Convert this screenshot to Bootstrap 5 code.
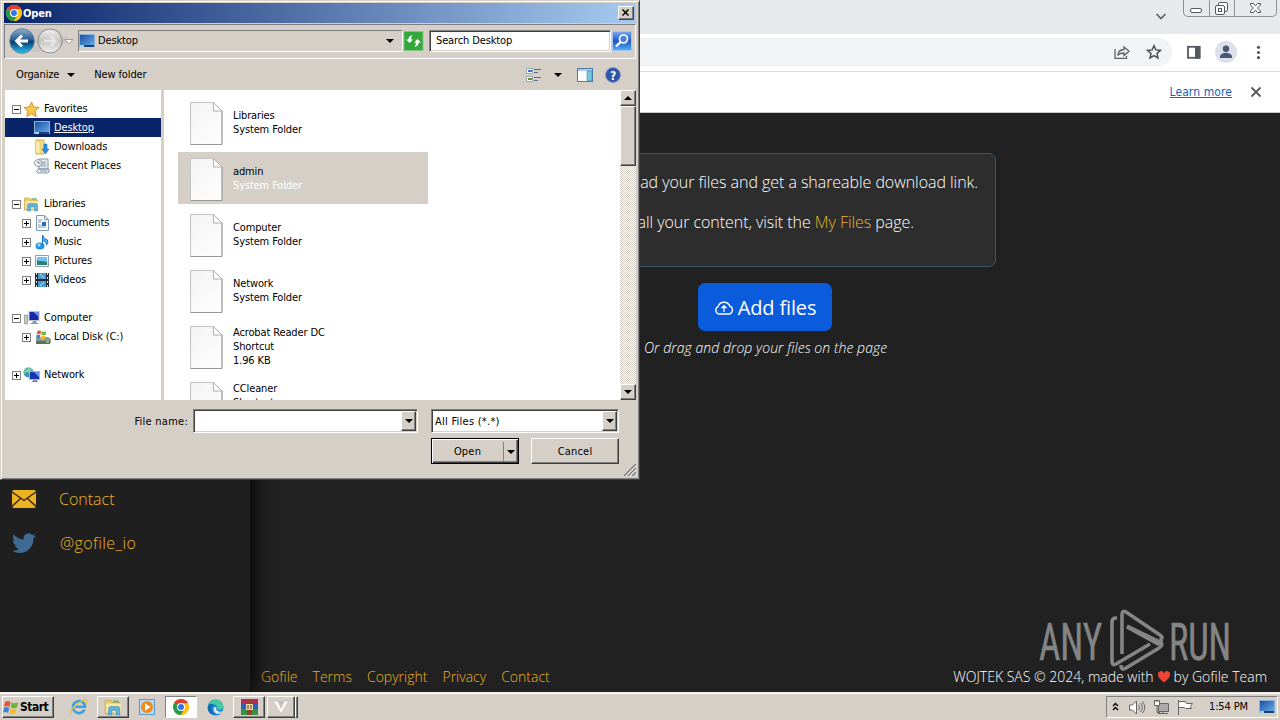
<!DOCTYPE html>
<html lang="en">
<head>
    <meta charset="UTF-8">
    <meta name="viewport" content="width=device-width, initial-scale=1.0">
    <title>Gofile - Upload</title>
    <link href="https://cdn.jsdelivr.net/npm/bootstrap@5.3.0/dist/css/bootstrap.min.css" rel="stylesheet">
    <style>
        :root { --face: #d5cfc7; --gold: #e9b32a; }
        body { width: 1280px; height: 720px; font: 11px/14px "DejaVu Sans Condensed", "DejaVu Sans", sans-serif; font-stretch: condensed; color: #000; letter-spacing: -.13px; }
        svg { display: block; flex: none; }
        .tabstrip { height: 34px; background: #e7eaed; }
        .win-controls { width: 94px; height: 17px; margin-right: 3px; border: 1px solid #8b9094; border-top: 0; border-radius: 0 0 5px 5px; }
        .win-controls div + div { border-left: 1px solid #8b9094; }
        .toolbar { height: 38px; padding-bottom: 2px; background: #fff; border-bottom: 1px solid #d9dbde; }
        .omnibox { width: 1172px; height: 28px; background: #f1f3f4; border-radius: 0 14px 14px 0; }
        .infobar { height: 41px; border-bottom: 1px solid #c9cacc; background: #fff; }
        .infobar a { font: 12px "DejaVu Sans Condensed", sans-serif; font-stretch: condensed; color: #1a62b8; letter-spacing: .1px; }
        .page { background: #212121; font-family: "Open Sans", sans-serif; font-stretch: normal; color: #fff; letter-spacing: 0; }
        .side { width: 250px; background: #1f1f1f; padding: 366px 0 0 12px; font-size: 16px; font-weight: 300; line-height: 24px; z-index: 1; box-shadow: 2px 0 18px #000; color: var(--gold); clip-path: inset(0 -30px 0 0); }
        .side-link { height: 44px; }
        .side-link span { margin-left: 23px; }
        .side-link .handle { margin-left: 24px; letter-spacing: .4px; }
        .info-box { width: 462px; height: 114px; margin: 40px 0 0 284px; padding: 16px 17px 0; background: #2d2d2d; border: 1px solid #3e566a; border-radius: 7px; font-size: 16px; font-weight: 300; line-height: 24px; text-align: right; white-space: nowrap; letter-spacing: -.05px; }
        .visit { padding-right: 64px; }
        .gold { color: var(--gold); }
        .add-files { width: 134px; height: 48px; margin: 16px 0 0 448px; padding-top: 2px; background: #0b5cdc; border-radius: 7px; font-size: 20px; color: #fff; letter-spacing: -.15px; }
        .drag-note { margin: 5px 0 0 394px; font-size: 14px; line-height: 24px; font-style: italic; font-weight: 300; white-space: nowrap; letter-spacing: .06px; }
        .page-foot { height: 30px; padding: 0 13px 0 11px; font-size: 14px; font-weight: 300; white-space: nowrap; }
        .foot-links { gap: 15px; }
        .watermark { left: 1036px; top: 608px; z-index: 3; }

        .dialog { left: 0; top: 0; width: 640px; height: 480px; z-index: 5; background: var(--face); border: 1px solid var(--face); border-right: 1px solid #404040; border-bottom: 1px solid #404040; padding: 2px 3px 0 2px; box-shadow: inset 1px 1px #fff, inset -1px -1px #808080; }
        .title { height: 20px; margin-left: 1px; background: linear-gradient(90deg, #0a246a, #a6caf0); color: #fff; font: bold 11px "DejaVu Sans Condensed", sans-serif; font-stretch: condensed; }
        .raised { background: var(--face); border: 1px solid; border-color: #fff #404040 #404040 #fff; box-shadow: inset -1px -1px #808080; }
        .sunken { border: 1px solid; border-color: #808080 #fff #fff #808080; }
        .field { background: #fff; border: 1px solid; border-color: #808080 #fff #fff #808080; box-shadow: inset 1px 1px #404040, inset -1px -1px #d5cfc7; }
        .address { height: 35px; margin: 1px 0 0 1px; padding: 0 0 2px 4px; }
        .path { width: 325px; height: 22px; margin-left: 3px; }
        .commands { height: 31px; }
        .tree { width: 156px; padding-top: 9px; margin-left: 2px; background: #fff; }
        .tree-row { height: 19px; padding: 1px 0 0 7px; white-space: nowrap; }
        .tree-row.child { padding-left: 17px; }
        .tree-row.leaf { padding-left: 29px; }
        .tree-row.picked { background: #0a246a; color: #fff; text-decoration: underline; }
        .tree-row span { margin-left: 4px; }
        .tree-row.child span { margin-left: 5px; }
        .box { width: 9px; height: 9px; margin-right: 2px; border: 1px solid #808080; background: linear-gradient(#000, #000) center / 5px 1px no-repeat; }
        .box.plus { background: linear-gradient(#000, #000) center / 5px 1px no-repeat, linear-gradient(#000, #000) center / 1px 5px no-repeat; }
        .tree-row.child .box { margin-right: 4px; }
        .files { margin-left: 3px; padding: 6px 0 0 14px; background: #fff; overflow: hidden; }
        .file { width: 250px; height: 52px; margin-bottom: 4px; padding: 2px 0 0 12px; }
        .file.picked { background: var(--face); }
        .file.picked .kind { color: #fff; }
        .file-text { margin-left: 10px; }
        .scroller { width: 16px; background: repeating-conic-gradient(#fff 0 25%, #d5cfc7 0 50%) 0 0 / 2px 2px; }
        .tri { width: 0; height: 0; border: 4px solid transparent; border-top-color: #000; border-bottom: 0; }
        .tri.up { border-top: 0; border-bottom: 4px solid #000; }
        .arrow-btn { width: 15px; }
        .name-row { height: 24px; margin-top: 9px; letter-spacing: .25px; }
        .name-row span { padding-top: 2px; }
        .win-btn { width: 88px; height: 26px; padding-top: 1px; letter-spacing: .2px; }
        .default-btn { border-color: #000; box-shadow: inset 1px 1px #fff, inset -1px -1px #404040, inset -2px -2px #808080; }

        .taskbar { height: 28px; background: var(--face); border-top: 1px solid #ece9e4; box-shadow: inset 0 1px #fff; padding: 1px 2px 0; z-index: 2; }
        .task { height: 22px; width: 32px; margin-right: 2px; }
        .start { width: 52px; height: 22px; font-weight: bold; font-size: 12px; letter-spacing: -.5px; }
        .start span { margin-left: 1px; }
        .tray { width: 172px; height: 22px; }
    </style>
</head>
<body class="overflow-hidden">
    <!-- shared icons -->
    <svg width="0" height="0" class="position-absolute">
        <defs>
            <linearGradient id="gScreen" x2="1" y2="1"><stop stop-color="#164b9c"/><stop offset="1" stop-color="#6eb2f2"/></linearGradient>
            <linearGradient id="gBack" x2="0" y2="1"><stop stop-color="#8eaed0"/><stop offset=".48" stop-color="#23558d"/><stop offset=".5" stop-color="#073568"/><stop offset="1" stop-color="#25c4f4"/></linearGradient>
            <linearGradient id="gFwd" x2="0" y2="1"><stop stop-color="#eee"/><stop offset=".5" stop-color="#c6c5c3"/><stop offset="1" stop-color="#eee"/></linearGradient>
            <linearGradient id="gPaper" x2="1" y2="1"><stop stop-color="#f3f3f3"/><stop offset="1" stop-color="#fff"/></linearGradient>
            <linearGradient id="gFind" x2="0" y2="1"><stop stop-color="#7fa9ec"/><stop offset=".5" stop-color="#1f55c8"/><stop offset="1" stop-color="#4fb4f2"/></linearGradient>
            <symbol id="chrome" viewBox="0 0 16 16">
                <circle cx="8" cy="8" r="8" fill="#fbc116"/>
                <path d="M8 8L1.100 4A8 8 0 0 1 14.900 4z" fill="#e33b2e"/>
                <path d="M1.100 4A8 8 0 0 0 8 16l3.400-6L8 8z" fill="#229a4b"/>
                <path d="M8 4.200h6.900A8 8 0 0 1 8 16l3.400-6z" fill="#fbc116"/>
                <circle cx="8" cy="8" r="4" fill="#fff"/><circle cx="8" cy="8" r="3" fill="#3175e0"/>
            </symbol>
            <symbol id="screen" viewBox="0 0 16 14">
                <rect x=".5" y=".5" width="15" height="12" fill="url(#gScreen)" stroke="#8db2d8"/>
                <path d="M1 11h14v2H1z" fill="#1c4175"/><path d="M1 11h4v2H1z" fill="#9fd4e6"/>
            </symbol>
            <symbol id="folder" viewBox="0 0 16 16">
                <path d="M1 2h5l1 2h7v10H1z" fill="#e9cd6e" stroke="#c7a548" stroke-width=".7"/>
                <path d="M2 5h13v8H2z" fill="#f8eaa5"/>
                <path d="M4 15V9.500q0-2 2-2h6q2 0 2 2V15h-3v-4H7v4z" fill="#5fb3dc" stroke="#3e88b5" stroke-width=".5"/>
                <path d="M8 3h5" stroke="#64b565" stroke-width="1.500"/>
            </symbol>
            <symbol id="pc" viewBox="0 0 16 16">
                <path d="M5 1h11v10H5z" fill="#b9c5d6"/><path d="M6 2h9v8H6z" fill="#1727a8"/>
                <path d="M10 2h5v5z" fill="#6e8ee8"/><path d="M9 11h4v2h2v1H7v-1h2z" fill="#8b98ab"/>
                <path d="M1 5h3v9H1z" fill="#c3ccb4" stroke="#777f77" stroke-width=".6"/>
            </symbol>
            <symbol id="flag" viewBox="0 0 16 16">
                <path d="M2 3q3-2 5.500 0L6.500 8Q4 6 1 8z" fill="#e8552c"/>
                <path d="M8.500 3.400q3 1.600 6.500 0L14 8.500q-3 1.500-6.300 0z" fill="#6cb63c"/>
                <path d="M.8 9q3-2 5.500 0L5 14q-2.500-2-5 0z" fill="#3d87d9"/>
                <path d="M7.400 9.400q3 1.600 6.300 0l-1 5q-3 1.600-6.400 0z" fill="#f5be29"/>
            </symbol>
            <symbol id="paper" viewBox="0 0 33 43">
                <path d="M.5.5H23.500L32 9V42.500H.5z" fill="url(#gPaper)" stroke="#c4c4c4"/>
                <path d="M.5 42.500H32V9" fill="none" stroke="#979797"/>
                <path d="M23.500.5V9H32z" fill="#fff" stroke="#b0b0b0"/>
            </symbol>
        </defs>
    </svg>

    <div class="d-flex flex-column h-100">
        <!-- Browser -->
        <div class="tabstrip d-flex justify-content-end">
            <svg width="12" height="34" class="me-3" viewBox="0 0 12 34"><path d="M1.500 14l4.500 4.500 4.500-4.500" fill="none" stroke="#5f6368" stroke-width="1.700"/></svg>
            <div class="win-controls d-flex">
                <div style="width:25px"><svg width="25" height="16"><rect x="6.500" y="8.500" width="11" height="4" rx="1.500" fill="#fff" stroke="#555a60"/></svg></div>
                <div style="width:25px"><svg width="24" height="16" fill="#fff" stroke="#555a60"><rect x="8.500" y="2.500" width="9" height="9" rx="1.500"/><rect x="5.500" y="5.500" width="9" height="9" rx="1.500"/><rect x="8.500" y="8.500" width="3" height="3"/></svg></div>
                <div class="flex-fill"><svg width="42" height="16"><path d="M15.500 3.500h3l2 2.500 2-2.500h3v1.500l-3 3 3 3v1.500h-3l-2-2.500-2 2.500h-3V11l3-3-3-3z" fill="#fff" stroke="#555a60"/></svg></div>
            </div>
        </div>
        <div class="toolbar d-flex align-items-center">
            <div class="omnibox d-flex align-items-center justify-content-end">
                <svg width="16" height="16" viewBox="0 0 16 16" fill="none" stroke="#5f6368" stroke-width="1.300"><path d="M1 5v9.300h11.500V12M4 11q0-5 6-5.500V3l5 4.300-5 4.200V9q-4 0-6 2z"/></svg>
                <svg width="16" height="16" viewBox="0 0 16 16" style="margin:0 10px 0 16px" fill="none" stroke="#4b5055" stroke-width="1.500"><path d="M8 1.800l1.900 4.100 4.500.5-3.400 3 1 4.500L8 11.600l-4 2.300 1-4.500-3.400-3 4.500-.5z"/></svg>
            </div>
            <svg width="108" height="28" viewBox="0 0 108 28">
                <rect x="16" y="8.800" width="11.500" height="11" fill="#fff" stroke="#55595e" stroke-width="1.800"/><path d="M23 8h5.400v12.700H23z" fill="#55595e"/>
                <circle cx="54" cy="14" r="11" fill="#dce0e8"/><circle cx="54" cy="10.800" r="3.200" fill="#4a5878"/><path d="M48 20v-2q2-3.200 6-3.200t6 3.200v2z" fill="#4a5878"/>
                <g fill="#55595e"><circle cx="86.500" cy="9.300" r="1.600"/><circle cx="86.500" cy="14.500" r="1.600"/><circle cx="86.500" cy="19.700" r="1.600"/></g>
            </svg>
        </div>
        <div class="infobar d-flex align-items-center justify-content-end">
            <a href="#">Learn more</a>
            <svg width="12" height="12" style="margin:0 18px 0 18px" viewBox="0 0 12 12"><path d="M1.500 1.500l9 9m0-9l-9 9" stroke="#55595e" stroke-width="1.800"/></svg>
        </div>

        <div class="page d-flex flex-fill">
            <div class="side">
                <div class="side-link d-flex align-items-start pt-2">
                    <svg width="24" height="24" viewBox="0 0 24 24"><rect y="3" width="24" height="18" rx="2" fill="#edb220"/><path d="M0 5l12 8.500L24 5M0 19.500l8.500-8M24 19.500l-8.500-8" fill="none" stroke="#2a2110" stroke-width="1.300"/></svg>
                    <span>Contact</span>
                </div>
                <div class="side-link d-flex align-items-start pt-2">
                    <svg width="24" height="24" viewBox="0 0 24 24"><path d="M23.900 4.700a9 9 0 0 1-2.800.8 4.900 4.900 0 0 0 2.100-2.700 9.800 9.800 0 0 1-3.100 1.200 4.900 4.900 0 0 0-8.400 4.500A13.900 13.900 0 0 1 1.600 3.300a4.900 4.900 0 0 0 1.500 6.600 4.900 4.900 0 0 1-2.200-.6v.1a4.900 4.900 0 0 0 3.900 4.800 4.900 4.900 0 0 1-2.200.1 4.900 4.900 0 0 0 4.600 3.400A9.900 9.900 0 0 1 0 19.700a13.900 13.900 0 0 0 7.500 2.200c9.100 0 14-7.500 14-14v-.6a10 10 0 0 0 2.400-2.600z" fill="#3e6a94"/></svg>
                    <span class="handle">@gofile_io</span>
                </div>
            </div>
            <div class="flex-fill d-flex flex-column">
                <div class="info-box">
                    <p class="mb-3">Upload your files and get a shareable download link.</p>
                    <p class="visit mb-0">To manage all your content, visit the <span class="gold">My Files</span> page.</p>
                </div>
                <div class="add-files d-flex align-items-center justify-content-center">
                    <svg width="20" height="20" viewBox="0 0 20 20" class="me-1" fill="none" stroke="#fff" stroke-width="1.300"><path d="M4.500 16a4 4 0 0 1-.4-7.400 6.200 6.200 0 0 1 11.700-.4A4.100 4.100 0 0 1 15.500 16zM10 14V8M7.500 10.200L10 7.700l2.500 2.500"/></svg>
                    <span>Add files</span>
                </div>
                <div class="drag-note">Or drag and drop your files on the page</div>
                <div class="page-foot d-flex align-items-center mt-auto">
                    <div class="foot-links d-flex gold"><span>Gofile</span><span>Terms</span><span>Copyright</span><span>Privacy</span><span>Contact</span></div>
                    <div class="made ms-auto d-flex align-items-center"><span>WOJTEK SAS © 2024, made with</span>
                        <svg width="12" height="12" class="mx-1" viewBox="0 0 12 12"><path d="M6 11.500Q0 7 0 3.800A3 3 0 0 1 6 2.600 3 3 0 0 1 12 3.800Q12 7 6 11.500z" fill="#f04438"/></svg>
                        <span>by Gofile Team</span>
                    </div>
                </div>
            </div>
        </div>

        <!-- Taskbar -->
        <div class="taskbar d-flex align-items-center">
            <div class="start raised d-flex align-items-center"><svg width="16" height="16"><use href="#flag"/></svg><span>Start</span></div>
            <svg width="18" height="18" viewBox="0 0 18 18" style="margin:0 9px 0 16px"><path d="M14.500 11.500A6 6 0 1 1 15 8.800H5.500" fill="none" stroke="#3aa0e6" stroke-width="2.600"/><path d="M1.500 16Q-1 13 6 7T16.500 2q1 1-.5 4" fill="none" stroke="#edbd3a" stroke-width="1.200"/></svg>
            <div class="task raised d-flex align-items-center justify-content-center"><svg width="18" height="18"><use href="#folder"/></svg></div>
            <svg width="16" height="16" viewBox="0 0 16 16" style="margin:0 10px 0 8px"><rect x=".5" y=".5" width="15" height="15" fill="#b5d9f2" stroke="#5b9ccc"/><circle cx="8" cy="8" r="6" fill="#f08a1d"/><path d="M6 4.300L11.500 8 6 11.700z" fill="#fff"/></svg>
            <div class="task sunken bg-white d-flex align-items-center justify-content-center"><svg width="16" height="16"><use href="#chrome"/></svg></div>
            <svg width="17" height="17" viewBox="0 0 17 17" style="margin:0 9px 0 8px"><circle cx="8.500" cy="8.500" r="8" fill="#1583cf"/><path d="M1 6Q4 0 10 .7q6 1 6.500 7-.5 3.300-4 3.300-3 0-2-2.500Q9 5 5 5 2 5 1 8z" fill="#43c8a0"/><path d="M7 8q-2 5 3 7 4 0 6-3-4 1.500-6-.5-1.500-1.500-.5-3.500z" fill="#d5e5ed"/><path d="M1 7q2-3 5-2-4 4 1 10.500Q0 14 1 7z" fill="#1767b4"/></svg>
            <div class="task raised d-flex align-items-center justify-content-center"><svg width="17" height="16" viewBox="0 0 17 16"><path d="M0 0h17v5H0z" fill="#b52b51"/><path d="M0 5h17v5H0z" fill="#2d5fb8"/><path d="M0 10h17v6H0z" fill="#36923a"/><path d="M6 0h5v16H6z" fill="#9c3f2c"/><path d="M5 5h7v6H5z" fill="#e9d6a0"/><path d="M7 6v4m3-4v4" stroke="#5b3a15"/></svg></div>
            <div class="task raised d-flex align-items-center ps-1" style="width:28px"><svg width="18" height="16" viewBox="0 0 18 16"><path d="M1 2h5l3 7 3-7h5L9 15z" fill="#f7f7f7" stroke="#b7b4ae" stroke-width=".6"/><path d="M6 2h6L9 8z" fill="#c2beb7"/></svg></div>
            <div class="raised task" style="width:3px;margin-left:-2px"></div>
            <div class="tray sunken ms-auto d-flex align-items-center">
                <svg width="98" height="20" viewBox="0 0 98 20" fill="none" stroke="#666">
                    <path d="M6 9l2.500-2.500L11 9M6 13l2.500-2.500L11 13" stroke="#000" stroke-width="1.400"/>
                    <path d="M22.500 8h3l4-4v13l-4-4h-3z" fill="#fff"/><path d="M31.500 8q2 2.500 0 5M33.500 6q3.500 4.500 0 9M35.500 4.500q4.500 6 0 11.500"/>
                    <path d="M51.500 6.500h10v8h-10z" fill="#aaa"/><path d="M51 16.500h10M56 14v2"/><path d="M47.500 3.500h5v5h-5z" fill="#fff"/><path d="M50 8.500v7h3M49 3v2m2-2v2"/>
                    <path d="M71.500 3v15"/><path d="M71.500 4.500h7l1 2h6l-2 3 1 2h-6l-1-1h-6z" fill="#fff"/>
                </svg>
                <span style="margin-left:4px">1:54 PM</span>
                <svg width="16" height="14" style="margin:0 2px 0 auto"><use href="#screen"/></svg>
            </div>
        </div>
    </div>

    <svg class="watermark position-absolute" width="200" height="66" viewBox="0 0 200 66">
        <g fill="#858585" stroke="#858585" font-family="Roboto, sans-serif" font-size="52" font-weight="400" stroke-width=".5">
            <text x="3" y="51.500" textLength="63" lengthAdjust="spacingAndGlyphs">ANY</text>
            <text x="133" y="51.500" textLength="62" lengthAdjust="spacingAndGlyphs">RUN</text>
        </g>
        <g fill="none" stroke="#858585" stroke-width="3.600" stroke-linejoin="round">
            <path d="M86 46V7q0-5 4-3l34 23q4 3 0 5"/><path d="M91 19l31 17q4-1 3-6"/><path d="M81 10h-1q-4 0-4 4v39q0 5 4 3l34-20"/><path d="M85 57q0 6 5 3l33-20q5-3 1-6L91 18"/>
        </g>
    </svg>

    <!-- File picker -->
    <div class="dialog position-absolute d-flex flex-column">
        <div class="title d-flex align-items-center">
            <svg width="16" height="16" style="margin-left:2px"><use href="#chrome"/></svg><span style="margin-left:1px">Open</span>
            <div class="raised ms-auto" style="width:16px;height:14px;margin-right:2px"><svg width="14" height="12" viewBox="0 0 14 12"><path d="M3.500 2.500l6 6m0-6l-6 6" stroke="#000" stroke-width="1.500"/></svg></div>
        </div>
        <div class="address sunken d-flex align-items-center">
            <svg width="66" height="28" viewBox="0 0 66 28">
                <path d="M12 2h33q7 0 8 6l10 5-10 5q-2 7-10 7H12z" fill="#c1beba" opacity=".6"/>
                <circle cx="13" cy="14" r="12.300" fill="url(#gBack)" stroke="#63839f"/><path d="M19 14H8M13 8.500L7.500 14l5.500 5.500" fill="none" stroke="#fff" stroke-width="2.800"/>
                <circle cx="41" cy="14" r="12" fill="url(#gFwd)" stroke="#8e8c89"/><path d="M35 14h11M41.500 9l5 5-5 5" fill="none" stroke="#e7e6e5" stroke-width="2.500"/>
                <path d="M56 12.500h8L60 16.500z" fill="#fff" stroke="#8b8883" stroke-width=".8"/>
            </svg>
            <div class="path sunken d-flex align-items-center"><svg width="16" height="14"><use href="#screen"/></svg><span style="margin-left:3px">Desktop</span><div class="tri ms-auto" style="margin-right:8px"></div></div>
            <svg width="21" height="20" viewBox="0 0 20 20"><rect x=".5" y=".5" width="19" height="19" fill="#32a83a" stroke="#85c386"/><path d="M6 12L2.500 8.500h2.200Q5 5 9 4 7.500 6 7.600 8.500h2zM14 8l3.500 3.500h-2.200Q15 15 11 16q1.500-2 1.400-4.500h-2z" fill="#fff"/></svg>
            <div class="field d-flex align-items-center" style="width:182px;height:22px;margin-left:5px;padding-left:6px">Search Desktop</div>
            <svg width="20" height="20" viewBox="0 0 20 20" style="margin-left:1px"><rect x=".5" y=".5" width="19" height="19" fill="url(#gFind)" stroke="#a9c6ee"/><circle cx="11.500" cy="8" r="4" fill="#4b82de" stroke="#fff" stroke-width="1.700"/><path d="M8.500 11L4 15.500" stroke="#fff" stroke-width="2.400"/></svg>
        </div>
        <div class="commands d-flex align-items-center">
            <span style="margin-left:13px">Organize</span><div class="tri ms-2"></div><span style="margin-left:19px">New folder</span>
            <svg width="112" height="18" viewBox="0 0 112 18" class="ms-auto">
                <g stroke="#9ba7b0"><rect x="2.500" y="2.500" width="6" height="5" fill="#fff"/><rect x="2.500" y="10.500" width="6" height="5" fill="#fff"/></g><path d="M4 4h4v2H4z" fill="#2b7ad1"/><path d="M4 12h4v2H4z" fill="#5c9434"/><path d="M10 3.500h7M10 6.500h4M10 11.500h7M10 14.500h4" stroke="#55708c"/>
                <path d="M30 7h8l-4 4z"/>
                <rect x="53.500" y="2.500" width="15" height="13" fill="#fff" stroke="#4e79a6"/><path d="M54 3h14v2H54z" fill="#a9c9e5"/><path d="M63 5h5v10h-5z" fill="#72c8e8" stroke="#4e79a6" stroke-width=".6"/>
                <circle cx="89" cy="9" r="7.500" fill="#2d55a8" stroke="#8a9bbd"/><text x="89" y="13.500" text-anchor="middle" fill="#fff" font-size="12" font-weight="bold">?</text>
            </svg>
        </div>
        <div class="d-flex" style="height:310px">
            <div class="tree">
                <div class="tree-row d-flex align-items-center"><div class="box"></div><svg width="17" height="17" viewBox="0 0 17 17"><path d="M8.500 1l2.200 5 5.300.5-4 3.600 1.200 5.400-4.700-2.800-4.700 2.800L5 10.100 1 6.500 6.300 6z" fill="#fbc94a" stroke="#e08a1e"/></svg><span>Favorites</span></div>
                <div class="tree-row leaf picked d-flex align-items-center"><svg width="16" height="14"><use href="#screen"/></svg><span>Desktop</span></div>
                <div class="tree-row leaf d-flex align-items-center"><svg width="16" height="16" viewBox="0 0 16 16"><path d="M2 1h8v14H2z" fill="#f3dc87" stroke="#d1ac4d"/><path d="M2 1l4 2v12l-4-1z" fill="#fbf0b4" stroke="#d1ac4d" stroke-width=".5"/><path d="M10 5h3v5h2l-3.500 5L8 10h2z" fill="#2c8be0" stroke="#1b63ad" stroke-width=".5"/></svg><span>Downloads</span></div>
                <div class="tree-row leaf d-flex align-items-center"><svg width="16" height="16" viewBox="0 0 16 16"><path d="M5 1h9v10H5zM4 11h11q1 4-2 4H4q-3-1 0-4z" fill="#e7edf2" stroke="#8797a5"/><path d="M7 4h5M7 6h5M7 8h5M6 13h7" stroke="#7e9cb8"/><circle cx="4" cy="5" r="3.500" fill="#f4f4f4" stroke="#929aa1"/><path d="M4 3v2h2" fill="none" stroke="#777"/></svg><span>Recent Places</span></div>
                <div class="tree-row"></div>
                <div class="tree-row d-flex align-items-center"><div class="box"></div><svg width="17" height="16"><use href="#folder"/></svg><span>Libraries</span></div>
                <div class="tree-row child d-flex align-items-center"><div class="box plus"></div><svg width="14" height="16" viewBox="0 0 14 16"><path d="M1.500.5h8l4 4v11h-12z" fill="#f6fafd" stroke="#7e9bb5"/><path d="M9.500.5v4h4M3 5h4M3 7h3M3 12h8M3 10h3" fill="none" stroke="#86a0b6"/><path d="M7 7h4v4H7z" fill="#2a6eae"/></svg><span>Documents</span></div>
                <div class="tree-row child d-flex align-items-center"><div class="box plus"></div><svg width="14" height="16" viewBox="0 0 14 16"><ellipse cx="5" cy="12" rx="4.500" ry="3.500" fill="#2794e2"/><path d="M7.500 12V1q1 4 5 5 1 3-1 5 0-4-3-4" fill="#4bb0ef" stroke="#1c78c4"/><circle cx="4" cy="11" r="1.500" fill="#9fdcff"/></svg><span>Music</span></div>
                <div class="tree-row child d-flex align-items-center"><div class="box plus"></div><svg width="14" height="14" viewBox="0 0 15 14" preserveAspectRatio="none"><path d="M.5 1.500h14v11H.5z" fill="#fff" stroke="#849bab"/><path d="M2 3h11v8H2z" fill="#71c7ef"/><path d="M2 8l5-1 6 1v3H2z" fill="#2d7a78"/><path d="M2 6l4 2H2z" fill="#467d3c"/></svg><span>Pictures</span></div>
                <div class="tree-row child d-flex align-items-center"><div class="box plus"></div><svg width="14" height="16" viewBox="0 0 14 16"><path d="M0 1h14v14H0z" fill="#222b35"/><path d="M3 1h8v6H3zM3 9h8v6H3z" fill="#4a9bd0"/><path d="M5 2l4 4M9 10l-4 4" stroke="#b1e2f0"/><path d="M1.500 1v14M12.500 1v14" stroke="#ddd" stroke-dasharray="2 2"/></svg><span>Videos</span></div>
                <div class="tree-row"></div>
                <div class="tree-row d-flex align-items-center"><div class="box"></div><svg width="17" height="16"><use href="#pc"/></svg><span>Computer</span></div>
                <div class="tree-row child d-flex align-items-center"><div class="box plus"></div><svg width="16" height="16" viewBox="0 0 16 16"><path d="M1 10l2-2h10l3 2v4H1z" fill="#8d9894"/><path d="M1 12h14v3H1z" fill="#5a7163"/><path d="M11 13h3" stroke="#7dea5c" stroke-width="1.500"/><svg x="1" y="0" width="11" height="11"><use href="#flag"/></svg></svg><span style="margin-left:3px">Local Disk (C:)</span></div>
                <div class="tree-row"></div>
                <div class="tree-row d-flex align-items-center"><div class="box plus"></div><svg width="17" height="16" viewBox="0 0 17 16"><circle cx="5.500" cy="5.500" r="5" fill="#3293bb"/><path d="M1 4q4-5 8-2L6 6 3 5 2 8z" fill="#83d29d"/><path d="M6 4h11v9H6z" fill="#a5b4cf"/><path d="M7 5h9v7H7z" fill="#1934b0"/><path d="M11 5h5v5z" fill="#6f97ec"/><path d="M10 13h4v1h1v1H9v-1h1z" fill="#7788a8"/></svg><span>Network</span></div>
            </div>
            <div class="files flex-fill">
                <div class="file d-flex align-items-center"><svg width="33" height="43"><use href="#paper"/></svg><div class="file-text">Libraries<div class="kind">System Folder</div></div></div>
                <div class="file picked d-flex align-items-center"><svg width="33" height="43"><use href="#paper"/></svg><div class="file-text">admin<div class="kind">System Folder</div></div></div>
                <div class="file d-flex align-items-center"><svg width="33" height="43"><use href="#paper"/></svg><div class="file-text">Computer<div class="kind">System Folder</div></div></div>
                <div class="file d-flex align-items-center"><svg width="33" height="43"><use href="#paper"/></svg><div class="file-text">Network<div class="kind">System Folder</div></div></div>
                <div class="file d-flex align-items-center"><svg width="33" height="43"><use href="#paper"/></svg><div class="file-text">Acrobat Reader DC<div>Shortcut</div><div>1.96 KB</div></div></div>
                <div class="file d-flex align-items-center"><svg width="33" height="43"><use href="#paper"/></svg><div class="file-text">CCleaner<div>Shortcut</div><div>&nbsp;</div></div></div>
            </div>
            <div class="scroller d-flex flex-column">
                <div class="raised d-flex align-items-center justify-content-center" style="height:16px"><div class="tri up"></div></div>
                <div class="raised" style="height:60px"></div>
                <div class="raised d-flex align-items-center justify-content-center mt-auto" style="height:16px"><div class="tri"></div></div>
            </div>
        </div>
        <div class="name-row d-flex align-items-center">
            <span class="text-end" style="width:185px">File name:</span>
            <div class="field d-flex justify-content-end" style="width:225px;height:24px;margin-left:5px;padding:1px"><div class="raised arrow-btn d-flex align-items-center justify-content-center"><div class="tri"></div></div></div>
            <div class="field d-flex align-items-center justify-content-between" style="width:188px;height:24px;margin-left:13px;padding:1px 1px 1px 3px"><span>All Files (*.*)</span><div class="raised arrow-btn h-100 d-flex align-items-center justify-content-center"><div class="tri"></div></div></div>
        </div>
        <div class="d-flex" style="margin:5px 0 0 428px">
            <div class="raised default-btn win-btn d-flex align-items-center"><span class="flex-fill text-center">Open</span><div class="d-flex align-items-center justify-content-center" style="width:15px;height:20px;border-left:1px solid #808080"><div class="tri"></div></div></div>
            <div class="raised win-btn d-flex align-items-center justify-content-center" style="margin-left:12px">Cancel</div>
        </div>
        <svg width="12" height="12" viewBox="0 0 12 12" class="ms-auto"><path d="M0 12L12 0M4 12l8-8M8 12l4-4" stroke="#808080" stroke-width="1.500"/><path d="M2 12L12 2M6 12l6-6" stroke="#fff"/></svg>
    </div>
    <script src="https://cdn.jsdelivr.net/npm/bootstrap@5.3.0/dist/js/bootstrap.bundle.min.js"></script>
</body>
</html>
